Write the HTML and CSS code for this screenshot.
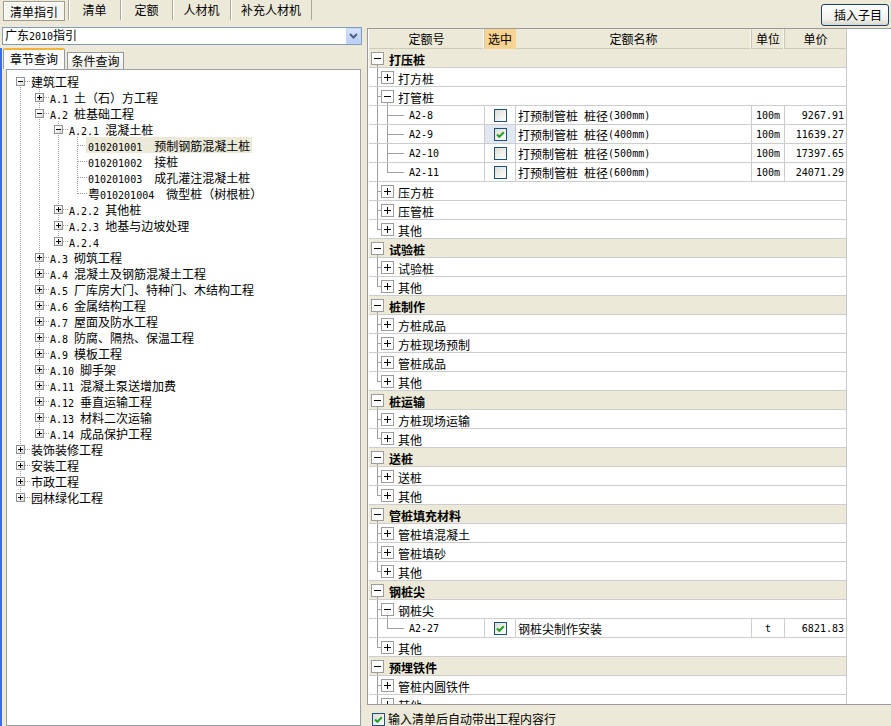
FILE: index.html
```html
<!DOCTYPE html>
<html>
<head>
<meta charset="utf-8">
<link rel="stylesheet" href="styles.css">
</head>
<body>
<div class="app">
  <div class="left">
    <div class="tabs">
      <div class="tab on t1">清单指引</div>
      <div class="tab t2">清单</div>
      <div class="tab t3">定额</div>
      <div class="tab t4">人材机</div>
      <div class="tab t5">补充人材机</div>
    </div>
    <div class="combo">
      <span class="combo-text">广东<span class="m">2010</span>指引</span>
      <span class="combo-btn"><svg width="15" height="16" viewBox="0 0 15 16"><polyline points="4,6 7.5,9.5 11,6" fill="none" stroke="#4d6185" stroke-width="2"/></svg></span>
    </div>
    <div class="lower">
      <div class="subtabs">
        <div class="stab on">章节查询</div>
        <div class="stab">条件查询</div>
      </div>
      <div class="treebox">
        <ul class="tree">
          <li><div class="node"><span class="tw"><i class="b9 mi"></i></span><span class="lb">建筑工程</span></div>
            <ul>
              <li><div class="node"><span class="tw"><i class="b9 pl"></i></span><span class="lb"><span class="m">A.1 </span>土（石）方工程</span></div></li>
              <li><div class="node"><span class="tw"><i class="b9 mi"></i></span><span class="lb"><span class="m">A.2 </span>桩基础工程</span></div>
                <ul>
                  <li><div class="node"><span class="tw"><i class="b9 mi"></i></span><span class="lb"><span class="m">A.2.1 </span>混凝土桩</span></div>
                    <ul>
                      <li><div class="node"><span class="tw"></span><span class="lb sel"><span class="m">010201001  </span>预制钢筋混凝土桩</span></div></li>
                      <li><div class="node"><span class="tw"></span><span class="lb"><span class="m">010201002  </span>接桩</span></div></li>
                      <li><div class="node"><span class="tw"></span><span class="lb"><span class="m">010201003  </span>成孔灌注混凝土桩</span></div></li>
                      <li><div class="node"><span class="tw"></span><span class="lb">粤<span class="m">010201004  </span>微型桩（树根桩）</span></div></li>
                    </ul>
                  </li>
                  <li><div class="node"><span class="tw"><i class="b9 pl"></i></span><span class="lb"><span class="m">A.2.2 </span>其他桩</span></div></li>
                  <li><div class="node"><span class="tw"><i class="b9 pl"></i></span><span class="lb"><span class="m">A.2.3 </span>地基与边坡处理</span></div></li>
                  <li><div class="node"><span class="tw"><i class="b9 pl"></i></span><span class="lb"><span class="m">A.2.4</span></span></div></li>
                </ul>
              </li>
              <li><div class="node"><span class="tw"><i class="b9 pl"></i></span><span class="lb"><span class="m">A.3 </span>砌筑工程</span></div></li>
              <li><div class="node"><span class="tw"><i class="b9 pl"></i></span><span class="lb"><span class="m">A.4 </span>混凝土及钢筋混凝土工程</span></div></li>
              <li><div class="node"><span class="tw"><i class="b9 pl"></i></span><span class="lb"><span class="m">A.5 </span>厂库房大门、特种门、木结构工程</span></div></li>
              <li><div class="node"><span class="tw"><i class="b9 pl"></i></span><span class="lb"><span class="m">A.6 </span>金属结构工程</span></div></li>
              <li><div class="node"><span class="tw"><i class="b9 pl"></i></span><span class="lb"><span class="m">A.7 </span>屋面及防水工程</span></div></li>
              <li><div class="node"><span class="tw"><i class="b9 pl"></i></span><span class="lb"><span class="m">A.8 </span>防腐、隔热、保温工程</span></div></li>
              <li><div class="node"><span class="tw"><i class="b9 pl"></i></span><span class="lb"><span class="m">A.9 </span>模板工程</span></div></li>
              <li><div class="node"><span class="tw"><i class="b9 pl"></i></span><span class="lb"><span class="m">A.10 </span>脚手架</span></div></li>
              <li><div class="node"><span class="tw"><i class="b9 pl"></i></span><span class="lb"><span class="m">A.11 </span>混凝土泵送增加费</span></div></li>
              <li><div class="node"><span class="tw"><i class="b9 pl"></i></span><span class="lb"><span class="m">A.12 </span>垂直运输工程</span></div></li>
              <li><div class="node"><span class="tw"><i class="b9 pl"></i></span><span class="lb"><span class="m">A.13 </span>材料二次运输</span></div></li>
              <li><div class="node"><span class="tw"><i class="b9 pl"></i></span><span class="lb"><span class="m">A.14 </span>成品保护工程</span></div></li>
            </ul>
          </li>
          <li><div class="node"><span class="tw"><i class="b9 pl"></i></span><span class="lb">装饰装修工程</span></div></li>
          <li><div class="node"><span class="tw"><i class="b9 pl"></i></span><span class="lb">安装工程</span></div></li>
          <li><div class="node"><span class="tw"><i class="b9 pl"></i></span><span class="lb">市政工程</span></div></li>
          <li><div class="node"><span class="tw"><i class="b9 pl"></i></span><span class="lb">园林绿化工程</span></div></li>
        </ul>
      </div>
    </div>
  </div>

  <div class="right">
    <div class="toolbar"><button class="btn">插入子目</button></div>
    <div class="gridwrap">
      <div class="grid">
        <div class="hd">
          <div class="h">定额号</div>
          <div class="h sel-h">选中</div>
          <div class="h">定额名称</div>
          <div class="h">单位</div>
          <div class="h last">单价</div>
        </div>

        <div class="r g"><span class="bw o"><i class="bx mi"></i></span><span class="tx">打压桩</span></div>
        <div class="r"><i class="i t"></i><span class="bw"><i class="bx pl"></i></span><span class="tx">打方桩</span></div>
        <div class="r"><i class="i t"></i><span class="bw o"><i class="bx mi"></i></span><span class="tx">打管桩</span></div>
        <div class="r lf">
          <div class="c c1"><i class="i v"></i><i class="j"></i><span class="m code">A2-8</span></div>
          <div class="c c2"><span class="cb"></span></div>
          <div class="c c3">打预制管桩<span class="m"> </span>桩径<span class="m">(300mm)</span></div>
          <div class="c c4"><span class="m">100m</span></div>
          <div class="c c5"><span class="m">9267.91</span></div>
        </div>
        <div class="r lf">
          <div class="c c1"><i class="i v"></i><i class="j"></i><span class="m code">A2-9</span></div>
          <div class="c c2 hl"><span class="cb"><svg width="11" height="11" viewBox="0 0 11 11"><polyline points="2,5.5 4.3,7.8 8.8,3.3" fill="none" stroke="#21a121" stroke-width="2"/></svg></span></div>
          <div class="c c3">打预制管桩<span class="m"> </span>桩径<span class="m">(400mm)</span></div>
          <div class="c c4"><span class="m">100m</span></div>
          <div class="c c5"><span class="m">11639.27</span></div>
        </div>
        <div class="r lf">
          <div class="c c1"><i class="i v"></i><i class="j"></i><span class="m code">A2-10</span></div>
          <div class="c c2"><span class="cb"></span></div>
          <div class="c c3">打预制管桩<span class="m"> </span>桩径<span class="m">(500mm)</span></div>
          <div class="c c4"><span class="m">100m</span></div>
          <div class="c c5"><span class="m">17397.65</span></div>
        </div>
        <div class="r lf">
          <div class="c c1"><i class="i v"></i><i class="j l2"></i><span class="m code">A2-11</span></div>
          <div class="c c2"><span class="cb"></span></div>
          <div class="c c3">打预制管桩<span class="m"> </span>桩径<span class="m">(600mm)</span></div>
          <div class="c c4"><span class="m">100m</span></div>
          <div class="c c5"><span class="m">24071.29</span></div>
        </div>
        <div class="r"><i class="i t"></i><span class="bw"><i class="bx pl"></i></span><span class="tx">压方桩</span></div>
        <div class="r"><i class="i t"></i><span class="bw"><i class="bx pl"></i></span><span class="tx">压管桩</span></div>
        <div class="r"><i class="i l"></i><span class="bw"><i class="bx pl"></i></span><span class="tx">其他</span></div>

        <div class="r g"><span class="bw o"><i class="bx mi"></i></span><span class="tx">试验桩</span></div>
        <div class="r"><i class="i t"></i><span class="bw"><i class="bx pl"></i></span><span class="tx">试验桩</span></div>
        <div class="r"><i class="i l"></i><span class="bw"><i class="bx pl"></i></span><span class="tx">其他</span></div>

        <div class="r g"><span class="bw o"><i class="bx mi"></i></span><span class="tx">桩制作</span></div>
        <div class="r"><i class="i t"></i><span class="bw"><i class="bx pl"></i></span><span class="tx">方桩成品</span></div>
        <div class="r"><i class="i t"></i><span class="bw"><i class="bx pl"></i></span><span class="tx">方桩现场预制</span></div>
        <div class="r"><i class="i t"></i><span class="bw"><i class="bx pl"></i></span><span class="tx">管桩成品</span></div>
        <div class="r"><i class="i l"></i><span class="bw"><i class="bx pl"></i></span><span class="tx">其他</span></div>

        <div class="r g"><span class="bw o"><i class="bx mi"></i></span><span class="tx">桩运输</span></div>
        <div class="r"><i class="i t"></i><span class="bw"><i class="bx pl"></i></span><span class="tx">方桩现场运输</span></div>
        <div class="r"><i class="i l"></i><span class="bw"><i class="bx pl"></i></span><span class="tx">其他</span></div>

        <div class="r g"><span class="bw o"><i class="bx mi"></i></span><span class="tx">送桩</span></div>
        <div class="r"><i class="i t"></i><span class="bw"><i class="bx pl"></i></span><span class="tx">送桩</span></div>
        <div class="r"><i class="i l"></i><span class="bw"><i class="bx pl"></i></span><span class="tx">其他</span></div>

        <div class="r g"><span class="bw o"><i class="bx mi"></i></span><span class="tx">管桩填充材料</span></div>
        <div class="r"><i class="i t"></i><span class="bw"><i class="bx pl"></i></span><span class="tx">管桩填混凝土</span></div>
        <div class="r"><i class="i t"></i><span class="bw"><i class="bx pl"></i></span><span class="tx">管桩填砂</span></div>
        <div class="r"><i class="i l"></i><span class="bw"><i class="bx pl"></i></span><span class="tx">其他</span></div>

        <div class="r g"><span class="bw o"><i class="bx mi"></i></span><span class="tx">钢桩尖</span></div>
        <div class="r"><i class="i t"></i><span class="bw o"><i class="bx mi"></i></span><span class="tx">钢桩尖</span></div>
        <div class="r lf">
          <div class="c c1"><i class="i v"></i><i class="j l2"></i><span class="m code">A2-27</span></div>
          <div class="c c2"><span class="cb"><svg width="11" height="11" viewBox="0 0 11 11"><polyline points="2,5.5 4.3,7.8 8.8,3.3" fill="none" stroke="#21a121" stroke-width="2"/></svg></span></div>
          <div class="c c3">钢桩尖制作安装</div>
          <div class="c c4"><span class="m">t</span></div>
          <div class="c c5"><span class="m">6821.83</span></div>
        </div>
        <div class="r"><i class="i l"></i><span class="bw"><i class="bx pl"></i></span><span class="tx">其他</span></div>

        <div class="r g"><span class="bw o"><i class="bx mi"></i></span><span class="tx">预埋铁件</span></div>
        <div class="r"><i class="i t"></i><span class="bw"><i class="bx pl"></i></span><span class="tx">管桩内圆铁件</span></div>
        <div class="r"><i class="i l"></i><span class="bw"><i class="bx pl"></i></span><span class="tx">其他</span></div>
      </div>
    </div>
    <div class="foot">
      <span class="cb"><svg width="11" height="11" viewBox="0 0 11 11"><polyline points="2,5.5 4.3,7.8 8.8,3.3" fill="none" stroke="#21a121" stroke-width="2"/></svg></span>
      <span class="foot-text">输入清单后自动带出工程内容行</span>
    </div>
  </div>
</div>
</body>
</html>
```

FILE: styles.css
```css
html, body {
  margin: 0;
  padding: 0;
}
body {
  width: 891px;
  height: 726px;
  overflow: hidden;
  background: #ece9d8;
  color: #000;
  font: 12px/16px "Noto Sans CJK SC", "Liberation Sans", sans-serif;
}
.m {
  font: 10px/16px "DejaVu Sans Mono", monospace;
  white-space: pre;
}
.app {
  display: flex;
  height: 726px;
}

/* ---------- left ---------- */
.left {
  width: 362px;
  flex: none;
  display: flex;
  flex-direction: column;
}
.tabs {
  display: flex;
  height: 22px;
}
.tab {
  height: 20px;
  line-height: 20px;
  text-align: center;
  box-sizing: border-box;
  border-left: 1px solid #aca899;
  box-shadow: inset 1px 0 0 #fff;
}
.tab.on {
  margin: 1px 3px 0 3px;
  height: 20px;
  border: 1px solid #a19d8c;
  background: #f6f5f0;
  box-shadow: inset 1px 1px 0 #fff;
}
.t1 { width: 62px; }
.t2 { width: 52px; }
.t3 { width: 52px; }
.t4 { width: 58px; }
.t5 { width: 82px; border-right: 1px solid #aca899; }

.combo {
  margin: 5px 0 0 2px;
  width: 360px;
  height: 18px;
  box-sizing: border-box;
  border: 1px solid #7f9db9;
  background: #fff;
  display: flex;
  align-items: center;
  justify-content: space-between;
}
.combo-text {
  padding-left: 2px;
  line-height: 16px;
}
.combo-btn {
  width: 15px;
  height: 16px;
  display: flex;
  background: linear-gradient(#dbe6fe, #b7cbf7);
  box-shadow: inset 0 0 0 1px #c5d5fa;
  border-radius: 1px;
}

.lower {
  margin-top: 3px;
  flex: 1;
  display: flex;
  flex-direction: column;
  border-left: 2px solid #3a6ce3;
  min-height: 0;
}
.subtabs {
  height: 21px;
  display: flex;
  align-items: flex-end;
  padding-left: 1px;
}
.stab {
  box-sizing: border-box;
  text-align: center;
  border: 1px solid #919b9c;
  border-bottom: 0;
}
.stab.on {
  width: 62px;
  height: 21px;
  line-height: 17px;
  background: #fcfcfe;
  border-top: 2px solid #f5b33b;
  border-radius: 2px 2px 0 0;
}
.stab:not(.on) {
  width: 57px;
  height: 17px;
  line-height: 16px;
  margin-left: 2px;
  background: linear-gradient(#fff, #ecebe5);
}
.treebox {
  flex: 1;
  margin-left: 4px;
  width: 355px;
  box-sizing: border-box;
  border: 1px solid #9aa0a6;
  background: #fff;
  padding: 3px 0 0 4px;
  overflow: hidden;
}
.tree, .tree ul {
  list-style: none;
  margin: 0;
  padding: 0;
}
.tree ul {
  padding-left: 19px;
}
.tree li {
  background-image: repeating-linear-gradient(to bottom, #a0a0a0 0 1px, transparent 1px 2px);
  background-repeat: no-repeat;
  background-position: 9px 0;
  background-size: 1px 100%;
}
.tree li:last-child {
  background-size: 1px 9px;
}
.tree > li:first-child {
  background-position: 9px 8px;
}
.node {
  display: flex;
  height: 16px;
  align-items: flex-start;
}
.tw {
  width: 19px;
  height: 16px;
  flex: none;
  display: block;
  background: repeating-linear-gradient(to right, #a0a0a0 0 1px, transparent 1px 2px) no-repeat 10px 8px / 9px 1px;
}
.b9 {
  display: block;
  width: 9px;
  height: 9px;
  box-sizing: border-box;
  margin: 4px 0 0 5px;
  border: 1px solid #8e9294;
  background-repeat: no-repeat;
}
.b9.mi {
  background-image: linear-gradient(#000, #000), linear-gradient(135deg, #fff 30%, #d6d3ca);
  background-position: 1px 3px, 0 0;
  background-size: 5px 1px, 100% 100%;
}
.b9.pl {
  background-image: linear-gradient(#000, #000), linear-gradient(#000, #000), linear-gradient(135deg, #fff 30%, #d6d3ca);
  background-position: 1px 3px, 3px 1px, 0 0;
  background-size: 5px 1px, 1px 5px, 100% 100%;
}
.lb {
  margin-left: 1px;
  white-space: nowrap;
  line-height: 16px;
  height: 16px;
  box-sizing: border-box;
  padding-top: 1px;
}
.lb .m {
  line-height: 15px;
}
.lb.sel {
  background: #ece9d8;
  margin-left: -1px;
  padding: 1px 2px 0;
}

/* ---------- right ---------- */
.right {
  flex: 1;
  min-width: 0;
  display: flex;
  flex-direction: column;
}
.toolbar {
  height: 28px;
  flex: none;
  display: flex;
  justify-content: flex-end;
  align-items: flex-start;
}
.btn {
  margin: 4px 2px 0 0;
  width: 68px;
  height: 22px;
  padding: 0 6px 0 0;
  border: 1px solid #1f3f6a;
  border-radius: 3px;
  background: linear-gradient(#ffffff, #f2f1ec 70%, #d9d5c8);
  font: 12px/16px "Noto Sans CJK SC", sans-serif;
  color: #000;
  text-align: right;
}
.gridwrap {
  margin-left: 5px;
  height: 677px;
  flex: none;
  box-sizing: border-box;
  border: 1px solid #9a9a9a;
  border-right: 0;
  background: #fff;
  padding-left: 1px;
  overflow: hidden;
}
.grid {
  width: 478px;
  height: 100%;
  box-sizing: border-box;
  border-right: 1px solid #c8c8c8;
}
.hd, .lf {
  display: grid;
  grid-template-columns: 116px 31px 236px 33px 61px;
}
.hd {
  height: 20px;
  box-sizing: border-box;
  background: #ece9d8;
  border-bottom: 1px solid #cdc9bb;
}
.h {
  text-align: center;
  line-height: 20px;
  border-right: 1px solid #cbc7b8;
  box-shadow: inset -1px 0 0 #f8f7f2;
}
.h.sel-h {
  background: #f8d391;
  border-right-color: #f8d391;
  box-shadow: none;
}
.h.last {
  border-right: 0;
  box-shadow: none;
}
.r {
  height: 19px;
  box-sizing: border-box;
  border-bottom: 1px solid #cdcdcd;
  display: flex;
  align-items: flex-start;
}
.r.lf {
  display: grid;
}
.r.g {
  background: #ece9d8;
  font-weight: bold;
  padding-left: 2px;
}
.tx {
  margin-left: 4px;
  height: 18px;
  box-sizing: border-box;
  padding-top: 2px;
  line-height: 17px;
  white-space: nowrap;
}
.r.g .tx {
  margin-left: 5px;
}
.i {
  display: block;
  width: 12px;
  height: 18px;
  flex: none;
  background-repeat: no-repeat;
}
.i.v {
  background-image: linear-gradient(#a0a0a0, #a0a0a0);
  background-position: 8px 0;
  background-size: 1px 18px;
}
.i.t {
  background-image: linear-gradient(#a0a0a0, #a0a0a0), linear-gradient(#a0a0a0, #a0a0a0);
  background-position: 8px 0, 8px 9px;
  background-size: 1px 18px, 4px 1px;
}
.i.l {
  background-image: linear-gradient(#a0a0a0, #a0a0a0), linear-gradient(#a0a0a0, #a0a0a0);
  background-position: 8px 0, 8px 9px;
  background-size: 1px 10px, 4px 1px;
}
.j {
  display: block;
  width: 24px;
  height: 18px;
  flex: none;
  background-repeat: no-repeat;
  background-image: linear-gradient(#a0a0a0, #a0a0a0), linear-gradient(#a0a0a0, #a0a0a0);
  background-position: 6px 0, 6px 9px;
  background-size: 1px 18px, 17px 1px;
}
.j.l2 {
  background-size: 1px 10px, 17px 1px;
}
.bw {
  display: block;
  width: 13px;
  height: 18px;
  flex: none;
  padding-top: 3px;
  box-sizing: border-box;
}
.bw.o {
  background: linear-gradient(#a0a0a0, #a0a0a0) no-repeat 6px 16px / 1px 2px;
}
.bx {
  display: block;
  width: 13px;
  height: 13px;
  box-sizing: border-box;
  border: 1px solid #9c9c9c;
  background-color: #fff;
  background-repeat: no-repeat;
}
.bx.mi {
  background-image: linear-gradient(#000, #000);
  background-position: 2px 5px;
  background-size: 7px 1px;
}
.bx.pl {
  background-image: linear-gradient(#000, #000), linear-gradient(#000, #000);
  background-position: 2px 5px, 5px 2px;
  background-size: 7px 1px, 1px 7px;
}
.c {
  height: 18px;
  box-sizing: border-box;
  padding-top: 2px;
  display: flex;
  align-items: center;
  border-right: 1px solid #cdcdcd;
  white-space: nowrap;
  overflow: hidden;
  line-height: 16px;
}
.c1 { align-items: flex-start; padding-top: 0; }
.code { margin-left: 4px; padding-top: 2px; line-height: 16px; }
.c2 { justify-content: center; padding-top: 1px; }
.c2.hl { background: #e1e8f3; }
.c3 { padding-left: 2px; }
.c4 { justify-content: center; }
.c5 { border-right: 0; justify-content: flex-end; padding-right: 2px; }
.cb {
  display: block;
  width: 13px;
  height: 13px;
  box-sizing: border-box;
  border: 1px solid #1c5180;
  background: linear-gradient(135deg, #dcdcd5, #fff);
  flex: none;
}
.cb svg {
  display: block;
}
.foot {
  height: 21px;
  flex: none;
  box-sizing: border-box;
  padding: 7px 0 0 10px;
  display: flex;
  align-items: center;
}
.foot-text {
  margin-left: 3px;
  line-height: 14px;
}
```
